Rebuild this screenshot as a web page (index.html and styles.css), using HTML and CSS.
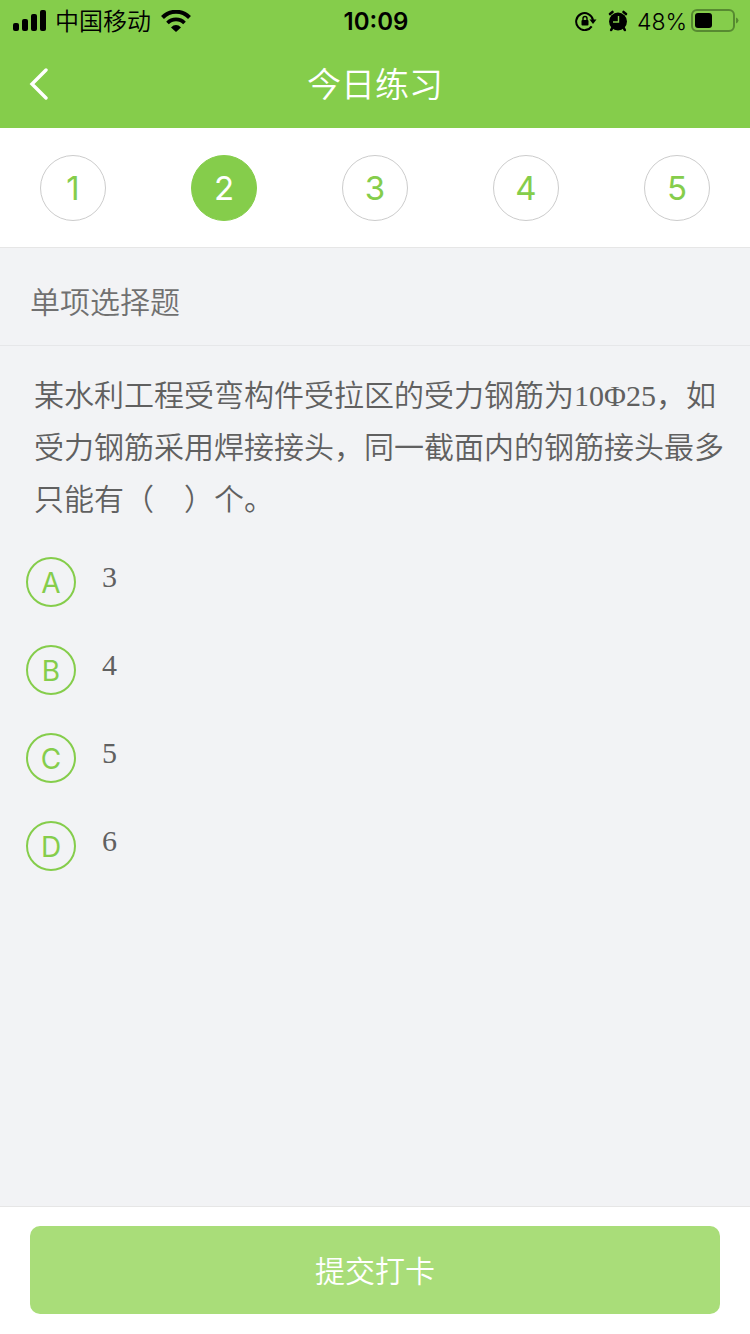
FILE: index.html
```html
<!DOCTYPE html>
<html lang="zh-CN">
<head>
	<meta charset="utf-8">
	<meta name="viewport" content="width=device-width, initial-scale=1">
	<title>今日练习</title>
	<link rel="stylesheet" href="styles.css">
</head>
<body>
	<header class="top">
		<div class="status">
			<div class="status-left">
				<svg width="34" height="22" viewBox="0 0 34 22">
					<rect x="0" y="13" width="6" height="8" rx="2"/>
					<rect x="9" y="9" width="6" height="12" rx="2"/>
					<rect x="18" y="4" width="6" height="17" rx="2"/>
					<rect x="27" y="0" width="6" height="21" rx="2"/>
				</svg>
				<span>中国移动</span>
				<svg class="wifi" width="30" height="22" viewBox="0 0 30 22">
					<path d="M1.500 7.500C9 -.2 21 -.2 28.500 7.500" fill="none" stroke="#000" stroke-width="4"/>
					<path d="M6.500 13C11 8.200 19 8.200 23.500 13" fill="none" stroke="#000" stroke-width="3.600"/>
					<path d="M10 17.500C13 14.200 17 14.200 20 17.500L15 22z"/>
				</svg>
			</div>
			<time class="clock">10:09</time>
			<div class="status-right">
				<svg width="22" height="20" viewBox="0 0 22 20">
					<path d="M16.700 15.400A8.500 8.500 0 1 1 18 9" fill="none" stroke="#000" stroke-width="2"/>
					<path d="M14.500 8.500H21.500L18 13z"/>
					<rect x="6.500" y="9" width="7" height="5.500" rx="1"/>
					<path d="M8 9.500V7.500a2 2 0 0 1 4 0v2" fill="none" stroke="#000" stroke-width="1.400"/>
				</svg>
				<svg width="20" height="22" viewBox="0 0 20 22">
					<circle cx="10" cy="11.500" r="9"/>
					<path d="M2 4L4.500 2M18 4L15.500 2M4.500 17.500L3.200 20M15.500 17.500L16.800 20" stroke="#000" stroke-width="2.600" stroke-linecap="round"/>
					<path d="M10.500 6V12H5" fill="none" stroke="#85cd4b" stroke-width="1.400"/>
				</svg>
				<span class="percent">48%</span>
				<svg width="49" height="24" viewBox="0 0 49 24">
					<rect x="2" y="1" width="42" height="21" rx="5" fill="none" stroke="#578a31" stroke-width="2"/>
					<rect x="5" y="4" width="17" height="15" rx="3"/>
					<path d="M46 8.500q2.500 1 2.500 3t-2.500 3z" fill="#578a31"/>
				</svg>
			</div>
		</div>
		<div class="bar">
			<button class="back" type="button" aria-label="返回">
				<svg width="20" height="32" viewBox="0 0 20 32"><path d="M17 2L3 16L17 30" fill="none" stroke="#fff" stroke-width="3.400" stroke-linecap="round"/></svg>
			</button>
			<h1>今日练习</h1>
		</div>
	</header>

	<nav class="numbers">
		<button type="button">1</button>
		<button type="button" class="active">2</button>
		<button type="button">3</button>
		<button type="button">4</button>
		<button type="button">5</button>
	</nav>

	<main>
		<h2>单项选择题</h2>
		<p class="question" id="question">某水利工程受弯构件受拉区的受力钢筋为10Φ25，如受力钢筋采用焊接接头，同一截面内的钢筋接头最多只能有（　）个。</p>
		<div class="options" role="radiogroup" aria-labelledby="question">
			<label class="option">
				<input type="radio" name="answer" value="A">
				<span class="letter">A</span>
				<span class="answer">3</span>
			</label>
			<label class="option">
				<input type="radio" name="answer" value="B">
				<span class="letter">B</span>
				<span class="answer">4</span>
			</label>
			<label class="option">
				<input type="radio" name="answer" value="C">
				<span class="letter">C</span>
				<span class="answer">5</span>
			</label>
			<label class="option">
				<input type="radio" name="answer" value="D">
				<span class="letter">D</span>
				<span class="answer">6</span>
			</label>
		</div>
	</main>

	<footer>
		<button type="button" class="submit">提交打卡</button>
	</footer>
</body>
</html>
```
FILE: styles.css
```css
* {
	box-sizing: border-box;
}
body {
	margin: 0;
	min-height: 100vh;
	display: flex;
	flex-direction: column;
	background: #f2f3f5;
	color: #606060;
	font-family: Inter, "Noto Sans CJK SC", sans-serif;
	font-weight: 350;
}
button {
	padding: 0;
	border: none;
	background: none;
	font: inherit;
	cursor: pointer;
}
svg {
	display: block;
	flex: none;
}
h1, h2, p {
	margin: 0;
	font-weight: 350;
}

/* header */
.top {
	background: #85cd4b;
}
.status {
	display: grid;
	grid-template-columns: 1fr auto 1fr;
	align-items: center;
	height: 40px;
	padding: 0 11px 0 13px;
	color: #000;
	font-size: 24px;
	line-height: 40px;
}
.status span, .clock {
	padding-top: 2px;
}
.status-left, .status-right {
	display: flex;
	align-items: center;
	gap: 8px;
}
.wifi {
	margin-left: 2px;
}
.status-right {
	justify-content: flex-end;
	gap: 11px;
}
.percent {
	margin: 0 -8px 0 -2px;
	font-size: 23px;
}
.clock {
	font-weight: 600;
}
.bar {
	display: grid;
	grid-template-columns: 60px 1fr 60px;
	align-items: center;
	height: 88px;
}
.back {
	display: flex;
	align-items: center;
	height: 88px;
	padding-left: 29px;
}
h1 {
	padding-top: 2px;
	color: #fff;
	font-size: 34px;
	line-height: 84px;
	text-align: center;
}

/* question numbers */
.numbers {
	display: flex;
	justify-content: space-between;
	padding: 27px 40px 26px;
	background: #fff;
	border-bottom: 1px solid #e6e6e6;
}
.numbers button {
	width: 66px;
	height: 66px;
	border: 1px solid #ccc;
	border-radius: 50%;
	color: #85cd4b;
	font-size: 33px;
	font-weight: 400;
}
.numbers .active {
	border-color: #85cd4b;
	background: #85cd4b;
	color: #fff;
}

/* question */
main {
	flex: 1;
}
h2 {
	padding: 29px 30px 18px;
	border-bottom: 1px solid #e6e7e9;
	color: #707070;
	font-size: 30px;
	line-height: 50px;
}
.question {
	padding: 24px 20px 31px 34px;
	font-family: "Liberation Serif", "Noto Sans CJK SC", serif;
	font-size: 30px;
	line-height: 52px;
	text-spacing-trim: space-all;
}
.options {
	display: flex;
	flex-direction: column;
	gap: 38px;
	padding: 0 26px 38px;
}
.option {
	display: grid;
	grid-template-columns: 50px 1fr;
	column-gap: 26px;
	cursor: pointer;
}
.option input {
	grid-area: 1 / 1;
	appearance: none;
	width: 50px;
	height: 50px;
	margin: 0;
	border: 2px solid #85cd4b;
	border-radius: 50%;
}
.option input:checked {
	background: #85cd4b;
}
.option input:checked + .letter {
	color: #fff;
}
.letter {
	grid-area: 1 / 1;
	z-index: 1;
	height: 50px;
	color: #85cd4b;
	font-size: 28px;
	font-weight: 400;
	line-height: 52px;
	text-align: center;
}
.answer {
	font-family: "Liberation Serif", "Noto Sans CJK SC", serif;
	font-size: 30px;
	line-height: 40px;
}

/* footer */
footer {
	padding: 19px 30px 20px;
	background: #fff;
	border-top: 1px solid #e6e6e6;
}
.submit {
	width: 100%;
	height: 88px;
	padding-bottom: 2px;
	border-radius: 10px;
	background: #a9dd79;
	color: #fff;
	font-size: 30px;
}
```
